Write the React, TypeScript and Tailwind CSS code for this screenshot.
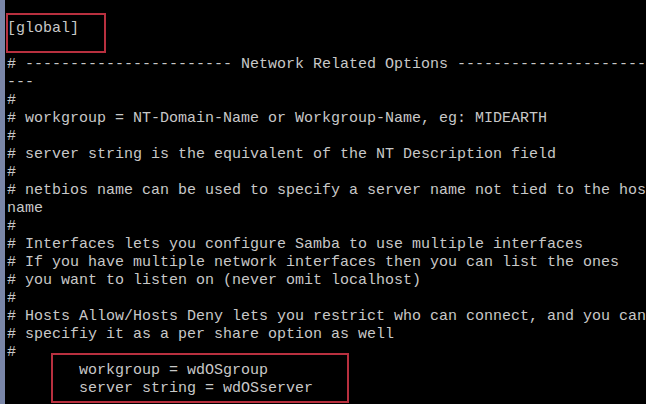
const lines = [
  "[global]",
  "",
  "# ----------------------- Network Related Options ----------------------------",
  "---",
  "#",
  "# workgroup = NT-Domain-Name or Workgroup-Name, eg: MIDEARTH",
  "#",
  "# server string is the equivalent of the NT Description field",
  "#",
  "# netbios name can be used to specify a server name not tied to the host",
  "name",
  "#",
  "# Interfaces lets you configure Samba to use multiple interfaces",
  "# If you have multiple network interfaces then you can list the ones",
  "# you want to listen on (never omit localhost)",
  "#",
  "# Hosts Allow/Hosts Deny lets you restrict who can connect, and you can",
  "# specifiy it as a per share option as well",
  "#",
  "        workgroup = wdOSgroup",
  "        server string = wdOSserver",
];

export default function App() {
  return (
    <div className="w-[646px] h-[404px] bg-black flex overflow-hidden">
      {/* window edge */}
      <div className="w-[5px] shrink-0 bg-[#7a86a8]" />

      <div className="relative flex-1 overflow-hidden pl-[2px] pt-[20px] text-[15px] leading-[18px] text-[#c8c8c8] font-[family-name:Liberation_Mono,monospace]">
        {lines.map((line, i) => (
          <div key={i} className="whitespace-pre h-[18px]">
            {line}
          </div>
        ))}

        {/* annotation boxes */}
        <div className="absolute left-[1px] top-[13px] w-[100px] h-[40px] border-2 border-[#b8303f]" />
        <div className="absolute left-[46px] top-[353px] w-[298px] h-[50px] border-2 border-[#b8303f]" />
      </div>
    </div>
  );
}
